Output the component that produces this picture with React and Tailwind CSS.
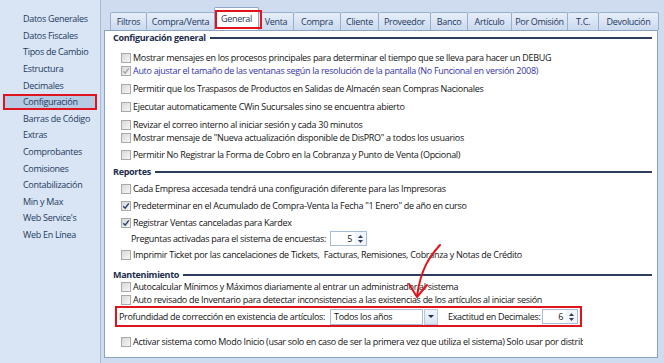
import React from 'react';

const MENU = ['Datos Generales', 'Datos Fiscales', 'Tipos de Cambio', 'Estructura', 'Decimales', 'Configuración', 'Barras de Código', 'Extras', 'Comprobantes', 'Comisiones', 'Contabilización', 'Min y Max', "Web Service's", 'Web En Línea'];

const TABS = [
  ['Filtros', 'w-[37px]'],
  ['Compra/Venta', 'w-[68px]'],
  ['General', 'w-[45px]'],
  ['Venta', 'w-[35px]'],
  ['Compra', 'w-[47px]'],
  ['Cliente', 'w-[38px]'],
  ['Proveedor', 'w-[52px]'],
  ['Banco', 'w-[37px]'],
  ['Artículo', 'w-[44px]'],
  ['Por Omisión', 'w-[56px]'],
  ['T.C.', 'w-[31px]'],
  ['Devolución', 'w-[60px]'],
];

const GENERAL = [
  { mt: 'mt-[7px]', text: 'Mostrar mensajes en los procesos principales para determinar el tiempo que se lleva para hacer un DEBUG' },
  { mt: 'mt-0', text: 'Auto ajustar el tamaño de las ventanas según la resolución de la pantalla (No Funcional en versión 2008)', checked: true, disabled: true, blue: true },
  { mt: 'mt-[5px]', text: 'Permitir que los Traspasos de Productos en Salidas de Almacén sean Compras Nacionales' },
  { mt: 'mt-[5px]', text: 'Ejecutar automaticamente CWin Sucursales sino se encuentra abierto' },
  { mt: 'mt-[5px]', text: 'Revizar el correo interno al iniciar sesión y cada 30 minutos' },
  { mt: 'mt-0', text: 'Mostrar mensaje de "Nueva actualización disponible de DisPRO" a todos los usuarios' },
  { mt: 'mt-[4px]', text: 'Permitir No Registrar la Forma de Cobro en la Cobranza y Punto de Venta (Opcional)' },
];

const Box = ({ checked, disabled }) => (
  <span className="w-[10px] h-[10px] shrink-0 border border-[#a9a9a9] bg-linear-to-br from-[#d8d8d8] to-[#f6f6f6] flex items-center justify-center">
    {checked && (
      <svg width="8" height="8" viewBox="0 0 8 8">
        <path d="M1.2 4.2 L3.2 6.2 L6.8 1.4" fill="none" stroke={disabled ? '#a8a8a8' : '#2a436b'} strokeWidth="1.5" />
      </svg>
    )}
  </span>
);

const Row = ({ mt, checked, disabled, blue, children }) => (
  <div className={`${mt} h-[13px] flex items-center pl-[16px] gap-[2px] whitespace-nowrap`}>
    <Box checked={checked} disabled={disabled} />
    <span className={blue ? 'text-[#3434a8]' : ''}>{children}</span>
  </div>
);

const Section = ({ mt, title }) => (
  <div className={`${mt} h-[13px] flex items-center pl-[8px] pr-[5px]`}>
    <span className="font-bold text-[#1b2d4d]">{title}</span>
    <span className="flex-1 h-[2px] bg-[#2b3e60] ml-[4px]" />
  </div>
);

const Spin = ({ value, w }) => (
  <div className={`${w} h-[15px] shrink-0 flex border border-[#a9bcd6] bg-white`}>
    <span className="flex-1 text-right pr-[3px] leading-[13px]">{value}</span>
    <span className="w-[11px] flex flex-col items-center justify-center gap-[2px] bg-[#f1f5fb]">
      <svg width="5" height="3" viewBox="0 0 5 3"><path d="M0 3 L2.5 0 L5 3Z" fill="#2d3f5c" /></svg>
      <svg width="5" height="3" viewBox="0 0 5 3"><path d="M0 0 L2.5 3 L5 0Z" fill="#2d3f5c" /></svg>
    </span>
  </div>
);

export default function App() {
  return (
    <div className="relative w-[664px] h-[363px] flex overflow-hidden bg-[#d3e0f1] text-[9px] tracking-[-0.3px] text-[#141414] font-['Open_Sans',sans-serif]">
      {/* Left menu */}
      <div className="w-[101px] h-full shrink-0 bg-[#d9e5f4] border-r border-[#a7bbd6] pt-[10.7px]">
        {MENU.map((m) => (
          <div key={m}
            className={`h-[16.6px] mx-[3px] pl-[18px] flex items-center text-[#233b5e] ${m === 'Configuración' ? 'bg-[#b6cae4] border-2 border-[#e0141c]' : 'border-2 border-transparent'}`}>
            {m}
          </div>
        ))}
      </div>

      {/* Main */}
      <div className="flex-1 flex flex-col bg-[#cfdcef]">
        <div className="h-[30px] flex items-end pl-[9px] shrink-0">
          {TABS.map(([t, w], i) => t === 'General' ? (
            <div key={t} className={`${w} relative h-[23px] -ml-px bg-white border-l border-t border-r border-[#8ea6c7] rounded-t-[2px] flex items-center justify-center text-[#1e3658] z-10`}>
              {t}
              <span className="absolute left-0 top-[2px] w-[47px] h-[19px] border-2 border-[#e0141c]" />
            </div>
          ) : (
            <div key={t}
              className={`${w} h-[18px] bg-linear-to-b from-[#e7eef9] to-[#cbdaef] border-t border-r ${i === 0 ? 'border-l' : ''} border-[#98afcf] rounded-t-[2px] flex items-center justify-center text-[#23395b]`}>
              {t}
            </div>
          ))}
        </div>

        <div className="ml-[3px] w-[554px] h-[328px] bg-white border border-[#8aa3c5] flex flex-col">
          <Section mt="mt-0" title="Configuración general" />
          {GENERAL.map((r) => (
            <Row key={r.text} mt={r.mt} checked={r.checked} disabled={r.disabled} blue={r.blue}>{r.text}</Row>
          ))}

          <Section mt="mt-[4px]" title="Reportes" />
          <Row mt="mt-[4px]">Cada Empresa accesada tendrá una configuración diferente para las Impresoras</Row>
          <Row mt="mt-[4px]" checked>Predeterminar en el Acumulado de Compra-Venta la Fecha "1 Enero" de año en curso</Row>
          <Row mt="mt-[4px]" checked>Registrar Ventas canceladas para Kardex</Row>
          <div className="mt-[3px] h-[13px] flex items-center pl-[26px] whitespace-nowrap">
            <span className="w-[199px]">Preguntas activadas para el sistema de encuestas:</span>
            <Spin value="5" w="w-[37px]" />
          </div>
          <Row mt="mt-[3px]">Imprimir Ticket por las cancelaciones de Tickets,&nbsp; Facturas, Remisiones, Cobranza y Notas de Crédito</Row>

          <Section mt="mt-[7px]" title="Mantenimiento" />
          <Row mt="-mt-px">Autocalcular Mínimos y Máximos diariamente al entrar un administrador al sistema</Row>
          <Row mt="mt-0">Auto revisado de Inventario para detectar inconsistencias a las existencias de los artículos al iniciar sesión</Row>
          <div className="ml-[10px] w-[467px] h-[21px] border-2 border-[#e0141c] flex items-center pl-[2px] whitespace-nowrap">
            <span className="w-[211px]">Profundidad de corrección en existencia de artículos:</span>
            <div className="w-[108px] h-[16px] flex shrink-0">
              <span className="flex-1 border border-[#a9bcd6] bg-white pl-[3px] leading-[14px]">Todos los años</span>
              <span className="w-[14px] ml-[1px] border border-[#b7c8de] bg-linear-to-b from-[#f1f5fb] to-[#dbe5f2] flex items-center justify-center">
                <svg width="6" height="3" viewBox="0 0 6 3"><path d="M0 0 L3 3 L6 0Z" fill="#1f2f48" /></svg>
              </span>
            </div>
            <span className="ml-[10px] w-[94px]">Exactitud en Decimales:</span>
            <Spin value="6" w="w-[36px]" />
          </div>
          <div className="mt-[8px] h-[13px] pl-[16px] flex">
            <div className="w-[462px] h-[13px] flex items-center gap-[2px] overflow-hidden whitespace-nowrap">
              <Box />
              <span>Activar sistema como Modo Inicio (usar solo en caso de ser la primera vez que utiliza el sistema) Solo usar por distribuidores</span>
            </div>
          </div>
        </div>
      </div>

      {/* Hand drawn annotation arrow */}
      <svg className="absolute inset-0 pointer-events-none" width="664" height="363" viewBox="0 0 664 363">
        <path d="M440 245 C 430 256, 421 268, 417 296" fill="none" stroke="#e3131b" strokeWidth="2" strokeLinecap="round" />
        <path d="M409 284 L417 297 L427 285" fill="none" stroke="#e3131b" strokeWidth="2" strokeLinecap="round" strokeLinejoin="round" />
      </svg>
    </div>
  );
}
